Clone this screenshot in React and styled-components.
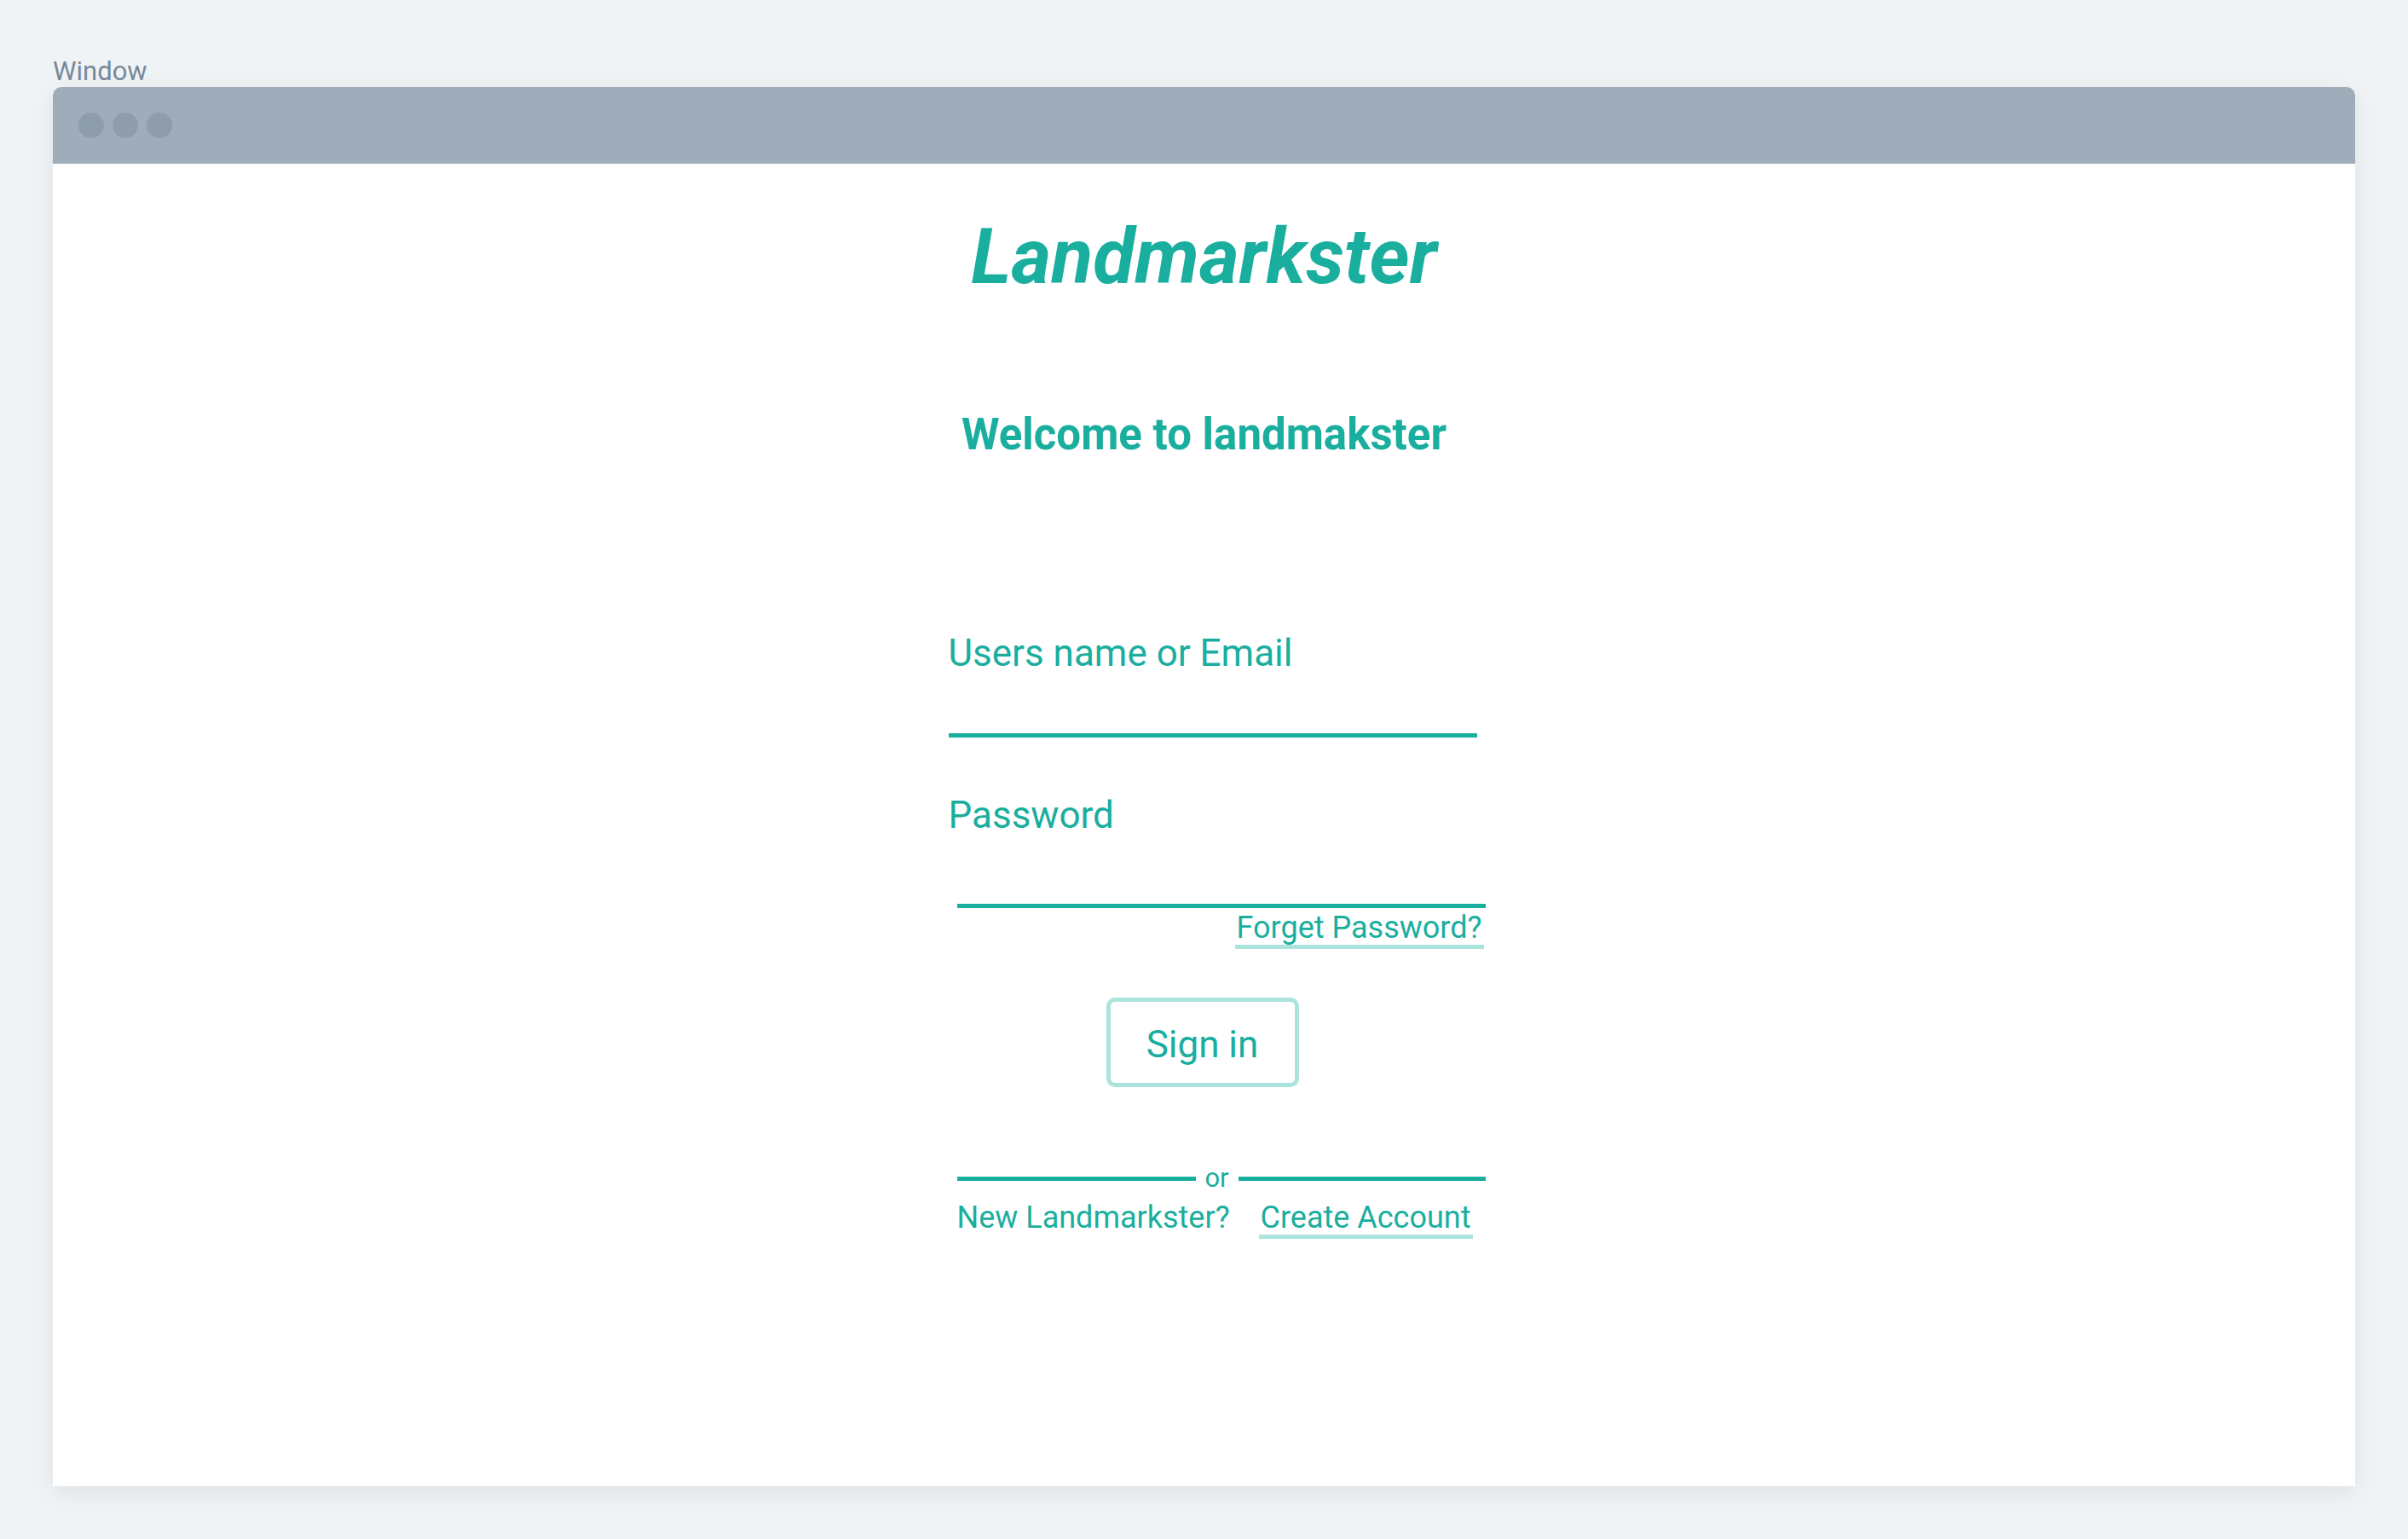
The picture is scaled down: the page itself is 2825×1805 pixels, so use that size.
import React from 'react';
import styled, { createGlobalStyle } from 'styled-components';

const teal = '#1aae9f';
const paleTeal = '#abe4dd';

const GlobalStyle = createGlobalStyle`
  *, *::before, *::after { box-sizing: border-box; }
  body {
    margin: 0;
    background: #eff3f6;
    font-family: Roboto, "Liberation Sans", sans-serif;
  }
`;

const Page = styled.div`
  display: flex;
  flex-direction: column;
  min-height: 100vh;
  padding: 66px 62px 62px;
`;

const WindowLabel = styled.div`
  color: #788a99;
  font-size: 31px;
  line-height: 36px;
`;

const WindowFrame = styled.section`
  flex: 1;
  display: flex;
  flex-direction: column;
  background: #ffffff;
  border-radius: 10px 10px 0 0;
  box-shadow: 0 8px 30px rgba(0, 0, 0, 0.07);
`;

const TitleBar = styled.div`
  display: flex;
  align-items: center;
  gap: 10px;
  height: 90px;
  padding: 0 30px;
  background: #9eadb9;
  border-radius: 10px 10px 0 0;
`;

const Dot = styled.span`
  width: 30px;
  height: 30px;
  border-radius: 50%;
  background: #8d9dac;
`;

const Content = styled.main`
  display: flex;
  flex-direction: column;
  align-items: center;
  padding: 60px 0;
  color: ${teal};
`;

const Brand = styled.h1`
  margin: 0;
  font-size: 90px;
  line-height: 100px;
  font-weight: 700;
  font-style: italic;
`;

const Welcome = styled.h2`
  margin: 128px 0 200px;
  font-size: 51px;
  line-height: 60px;
  font-weight: 700;
`;

const Form = styled.form`
  display: flex;
  flex-direction: column;
  width: 660px;
`;

const Field = styled.div`
  display: flex;
  flex-direction: column;
  padding-left: 30px;

  & + & {
    margin-top: 65px;
  }
`;

const Label = styled.label`
  font-size: 44px;
  line-height: 52px;
`;

const Input = styled.input`
  width: 620px;
  height: ${(p) => (p.$tall ? 83 : 73)}px;
  align-self: ${(p) => (p.$end ? 'flex-end' : 'flex-start')};
  padding: 0;
  border: 0;
  border-bottom: 5px solid ${teal};
  outline: none;
  background: transparent;
  color: ${teal};
  font: inherit;
  font-size: 36px;
`;

const TextLink = styled.a`
  padding: 0 2px;
  border-bottom: 5px solid ${paleTeal};
  color: ${teal};
  font-size: 36px;
  line-height: 40px;
  text-decoration: none;
`;

const ForgetRow = styled.div`
  display: flex;
  justify-content: flex-end;
  padding: 3px 2px 0 0;
`;

const SignInRow = styled.div`
  display: flex;
  justify-content: center;
  padding: 57px 4px 89px 0;
`;

const SignIn = styled.button`
  width: 226px;
  height: 105px;
  padding: 5px 0 0;
  border: 5px solid ${paleTeal};
  border-radius: 10px;
  background: transparent;
  color: ${teal};
  font: inherit;
  font-size: 44px;
  line-height: 52px;
`;

const Divider = styled.div`
  display: flex;
  align-items: center;
  padding-left: 40px;
  font-size: 31px;
  line-height: 36px;
`;

const Rule = styled.span`
  flex: ${(p) => p.$grow} 1 0;
  height: 5px;
  background: ${teal};
`;

const Or = styled.span`
  width: 50px;
  text-align: center;
`;

const SignUpRow = styled.div`
  display: flex;
  justify-content: space-between;
  padding: 8px 15px 0 40px;
  font-size: 36px;
  line-height: 40px;
`;

export default function App() {
  return (
    <>
      <GlobalStyle />
      <Page>
        <WindowLabel>Window</WindowLabel>
        <WindowFrame>
          <TitleBar>
            <Dot />
            <Dot />
            <Dot />
          </TitleBar>
          <Content>
            <Brand>Landmarkster</Brand>
            <Welcome>Welcome to landmakster</Welcome>
            <Form onSubmit={(e) => e.preventDefault()}>
              <Field>
                <Label htmlFor="user">Users name or Email</Label>
                <Input id="user" type="text" autoComplete="username" />
              </Field>
              <Field>
                <Label htmlFor="password">Password</Label>
                <Input id="password" type="password" autoComplete="current-password" $tall $end />
              </Field>
              <ForgetRow>
                <TextLink href="#forget">Forget Password?</TextLink>
              </ForgetRow>
              <SignInRow>
                <SignIn type="submit">Sign in</SignIn>
              </SignInRow>
              <Divider>
                <Rule $grow={28} />
                <Or>or</Or>
                <Rule $grow={29} />
              </Divider>
              <SignUpRow>
                <span>New Landmarkster?</span>
                <TextLink href="#create">Create Account</TextLink>
              </SignUpRow>
            </Form>
          </Content>
        </WindowFrame>
      </Page>
    </>
  );
}
